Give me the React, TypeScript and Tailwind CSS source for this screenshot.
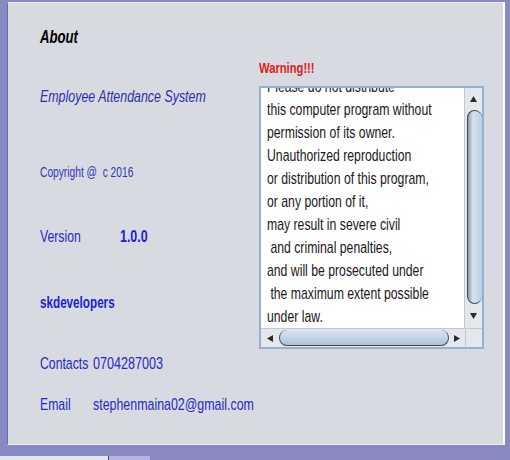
import React from 'react';

const LINES = [
  'Please do not distribute',
  'this computer program without',
  'permission of its owner.',
  'Unauthorized reproduction',
  'or distribution of this program,',
  'or any portion of it,',
  'may result in severe civil',
  '\u00a0and criminal penalties,',
  'and will be prosecuted under',
  '\u00a0the maximum extent possible',
  'under law.',
];

function Arrow({ dir }: { dir: 'up' | 'down' | 'left' | 'right' }) {
  const pts = {
    up: '0,6 3.5,0 7,6',
    down: '0,0 3.5,6 7,0',
    left: '6,0 0,3.5 6,7',
    right: '0,0 6,3.5 0,7',
  }[dir];
  const vert = dir === 'up' || dir === 'down';
  return (
    <svg width={vert ? 7 : 6} height={vert ? 6 : 7} viewBox={vert ? '0 0 7 6' : '0 0 6 7'}>
      <polygon points={pts} fill="#2a2a2a" />
    </svg>
  );
}

export default function App() {
  return (
    <div className="w-[510px] h-[460px] bg-[#8989c2] flex flex-col overflow-hidden font-['Liberation_Sans',Arial,sans-serif]">
      {/* main dialog panel */}
      <div className="mt-[2px] ml-[7px] mr-[5px] h-[443px] bg-[#d7dae1] border-l border-l-[#6c6ca4] border-t border-t-[#e9ebf0] border-r-2 border-r-white border-b border-b-[#eef0f4] flex">
        {/* left column */}
        <div className="w-[251px] pl-[32px] flex flex-col">
          <div className="mt-[24px] h-[20px] text-[18px] leading-[20px] font-bold italic text-black">
            <span className="inline-block scale-x-[0.73] origin-left">About</span>
          </div>
          <div className="mt-[40px] h-[20px] text-[17px] leading-[20px] italic text-[#2f2fa8]">
            <span className="inline-block scale-x-[0.73] origin-left whitespace-nowrap">Employee Attendance System</span>
          </div>
          <div className="mt-[56px] h-[18px] text-[14px] leading-[18px] text-[#3636b4]">
            <span className="inline-block scale-x-[0.73] origin-left whitespace-nowrap">Copyright @&nbsp; c 2016</span>
          </div>
          <div className="mt-[46px] h-[20px] flex text-[17px] leading-[20px] text-[#2828c4]">
            <span className="w-[80px] inline-block scale-x-[0.72] origin-left">Version</span>
            <span className="inline-block scale-x-[0.73] origin-left font-bold text-[#1c1cd0]">1.0.0</span>
          </div>
          <div className="mt-[46px] h-[20px] text-[16px] leading-[20px] font-bold text-[#1e1ed6]">
            <span className="inline-block scale-x-[0.73] origin-left">skdevelopers</span>
          </div>
          <div className="mt-[41px] h-[20px] flex text-[17px] leading-[20px] text-[#2828c4] whitespace-nowrap">
            <span className="w-[53px] shrink-0 inline-block scale-x-[0.72] origin-left">Contacts</span>
            <span className="inline-block scale-x-[0.74] origin-left">0704287003</span>
          </div>
          <div className="mt-[21px] h-[20px] flex text-[17px] leading-[20px] text-[#2828c4] whitespace-nowrap">
            <span className="w-[53px] shrink-0 inline-block scale-x-[0.72] origin-left">Email</span>
            <span className="inline-block scale-x-[0.73] origin-left">stephenmaina02@gmail.com</span>
          </div>
        </div>

        {/* right column */}
        <div className="w-[225px] flex flex-col">
          <div className="mt-[55px] h-[20px] text-[14px] leading-[20px] font-bold text-[#e01c18]">
            <span className="inline-block scale-x-[0.8] origin-left">Warning!!!</span>
          </div>
          <div className="mt-[8px] h-[263px] border-2 border-[#93b2d2] bg-[#e6e8ec] flex flex-col">
            <div className="flex h-[240px]">
              {/* text area */}
              <div className="w-[205px] bg-white overflow-hidden border-r border-[#c4c8ce]">
                <div className="-mt-[13px] pl-[6px] text-[17px] leading-[23px] text-[#22161a] whitespace-pre">
                  {LINES.map((l) => (
                    <div key={l} className="scale-x-[0.72] origin-left">{l}</div>
                  ))}
                </div>
              </div>
              {/* vertical scrollbar */}
              <div className="flex-1 flex flex-col items-center bg-[#e4e7ec]">
                <div className="h-[22px] flex items-center justify-center">
                  <Arrow dir="up" />
                </div>
                <div className="w-[15px] h-[194px] rounded-[9px] border border-[#3d4b5c] border-r-0 bg-[linear-gradient(90deg,#8d99a6_0%,#d7e3ef_35%,#bcd0e4_100%)] ml-[2px]" />
                <div className="flex-1 flex items-center justify-center">
                  <Arrow dir="down" />
                </div>
              </div>
            </div>
            {/* horizontal scrollbar */}
            <div className="flex-1 flex border-t border-[#c4c8ce]">
              <div className="w-[205px] flex items-center bg-[#e4e7ec] border-r border-[#c4c8ce]">
                <div className="w-[18px] flex items-center justify-center">
                  <Arrow dir="left" />
                </div>
                <div className="w-[170px] h-[16px] rounded-[9px] border border-[#3d4b5c] border-t-0 bg-[linear-gradient(180deg,#d9e5f1_0%,#bfd2e6_60%,#aebfd2_100%)]" />
                <div className="flex-1 flex items-center justify-center">
                  <Arrow dir="right" />
                </div>
              </div>
              <div className="flex-1 bg-[#e4e7ec]" />
            </div>
          </div>
        </div>
      </div>

      {/* bottom edge / taskbar peek */}
      <div className="mt-auto h-[4px] flex">
        <div className="w-[108px] bg-[#e4e5ec]" />
        <div className="w-[1px] bg-[#4b4b60]" />
        <div className="w-[41px] bg-[#b3b3e4]" />
        <div className="flex-1 bg-[#8989c2]" />
      </div>
    </div>
  );
}
